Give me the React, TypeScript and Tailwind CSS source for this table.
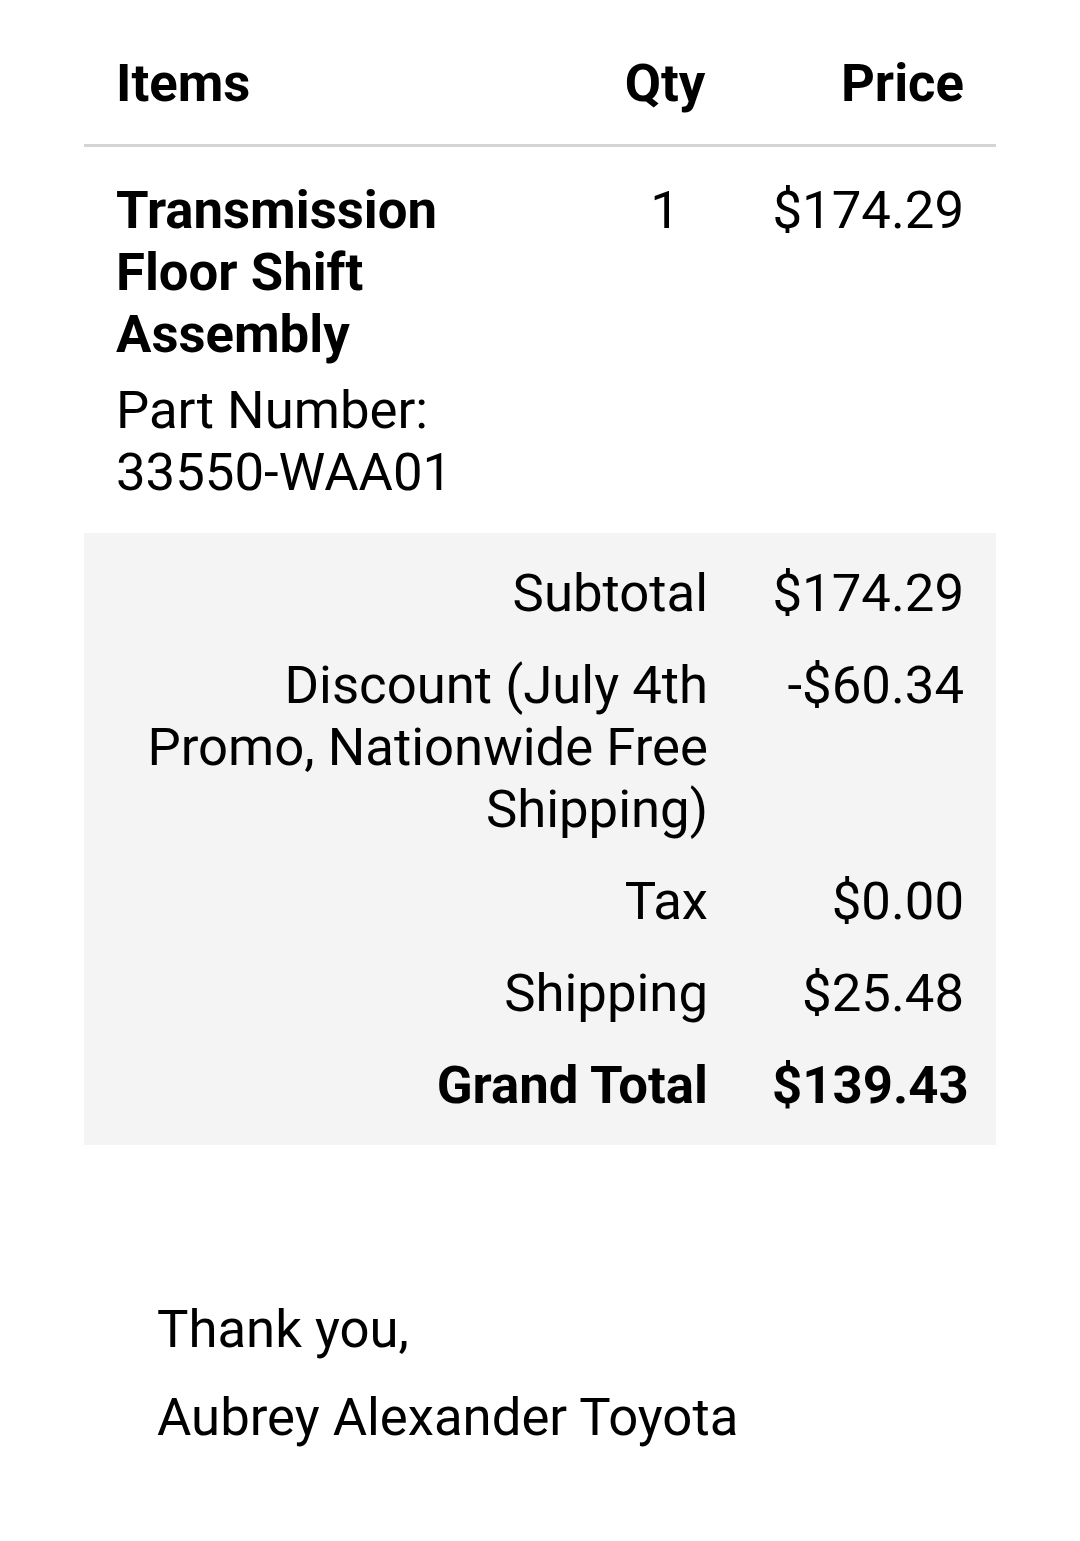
import React from "react";

const summary = [
  { label: "Subtotal", value: "$174.29" },
  {
    label: "Discount (July 4th Promo, Nationwide Free Shipping)",
    value: "-$60.34",
  },
  { label: "Tax", value: "$0.00" },
  { label: "Shipping", value: "$25.48" },
];

const App = () => {
  return (
    <div className="min-h-screen bg-white font-['Roboto',sans-serif] text-[52.7px] leading-[62px] text-black">
      <div className="mx-auto w-[912px] pt-[22px]">
        {/* header */}
        <div className="grid grid-cols-[506px_150px_256px] border-b-[3px] border-[#d4d4d4] font-bold">
          <div className="px-[32px] py-[30px]">Items</div>
          <div className="px-[32px] py-[30px] text-center">Qty</div>
          <div className="px-[32px] py-[30px] text-right">Price</div>
        </div>

        {/* item row */}
        <div className="grid grid-cols-[506px_150px_256px]">
          <div className="px-[32px] pt-[32px] pb-[30px]">
            <div className="font-bold">Transmission Floor Shift Assembly</div>
            <div className="mt-[14px]">Part Number: 33550-WAA01</div>
          </div>
          <div className="px-[32px] pt-[32px] text-center">1</div>
          <div className="px-[32px] pt-[32px] text-right">$174.29</div>
        </div>

        {/* totals */}
        <div className="bg-[#f4f4f4] py-[14px]">
          {summary.map((row) => (
            <div key={row.label} className="grid grid-cols-[656px_256px]">
              <div className="px-[32px] py-[15px] text-right">{row.label}</div>
              <div className="px-[32px] py-[15px] text-right">{row.value}</div>
            </div>
          ))}
          <div className="grid grid-cols-[656px_256px] font-bold">
            <div className="px-[32px] py-[15px] text-right">Grand Total</div>
            <div className="px-[32px] py-[15px] text-right">$139.43</div>
          </div>
        </div>
      </div>

      <div className="mx-auto w-[912px] px-[73px] pt-[153px] pb-[80px]">
        <p>Thank you,</p>
        <p className="mt-[26px]">Aubrey Alexander Toyota</p>
      </div>
    </div>
  );
};

export default App;
